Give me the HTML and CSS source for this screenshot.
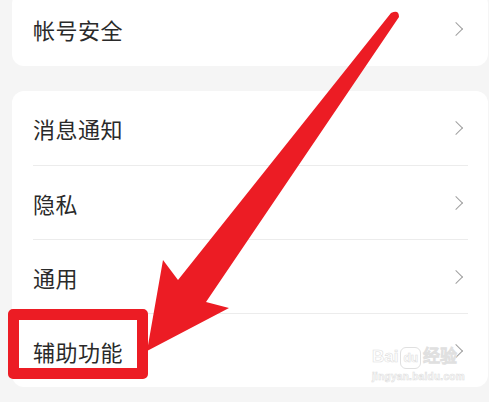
FILE: index.html
```html
<!DOCTYPE html>
<html lang="zh-CN">
<head>
    <meta charset="UTF-8">
    <meta name="viewport" content="width=device-width, initial-scale=1.0">
    <title>设置</title>
    <link rel="stylesheet" href="styles.css">
</head>
<body>
    <div class="page">
        <div class="card card-top">
            <div class="row"><span class="label">帐号安全</span><span class="chevron"></span></div>
        </div>

        <div class="card">
            <div class="row"><span class="label">消息通知</span><span class="chevron"></span></div>
            <div class="row"><span class="label">隐私</span><span class="chevron"></span></div>
            <div class="row"><span class="label">通用</span><span class="chevron"></span></div>
            <div class="row"><span class="label">辅助功能</span><span class="chevron"></span></div>
        </div>

        <!-- annotation layer -->
        <div class="highlight"></div>
        <svg class="arrow" width="489" height="402" viewBox="0 0 489 402">
            <path d="M391 21 L178 288 L163 268 L147 359 L229 316 L206 310 L399 25 Q399 17 391 21 Z" fill="#ec1c24"/>
        </svg>

        <div class="watermark">
            <div class="wm-logo">Bai<span class="wm-du">du</span>经验</div>
            <div class="wm-url">jingyan.baidu.com</div>
        </div>
    </div>
</body>
</html>
```

FILE: styles.css
```css
* {
    margin: 0;
    padding: 0;
    box-sizing: border-box;
}

body {
    background: #f5f5f5;
    font-family: "Noto Sans CJK SC", "Noto Sans", sans-serif;
    color: #2a2a2a;
    width: 489px;
    height: 402px;
    overflow: hidden;
}

.page {
    position: relative;
    height: 402px;
    padding: 0 1px 0 12px;
}

.card {
    background: #fff;
    border-radius: 12px;
    padding: 0 20px 0 21px;
    margin-top: 25px;
}

.card-top {
    margin-top: -8px;
}

.row {
    display: flex;
    align-items: center;
    justify-content: space-between;
    height: 74px;
    border-top: 1px solid #ececec;
}

.row:first-child {
    border-top: none;
}

.label {
    font-size: 22px;
    letter-spacing: 0.5px;
}

.chevron {
    width: 10px;
    height: 10px;
    margin-right: 7px;
    border-top: 1.8px solid #a0a0a0;
    border-right: 1.8px solid #a0a0a0;
    transform: rotate(45deg);
}

.highlight {
    position: absolute;
    left: 8px;
    top: 317px;
    width: 140px;
    height: 70px;
    border: 11px solid #ec1c24;
    border-radius: 5px;
}

.arrow {
    position: absolute;
    left: 0;
    top: 0;
}

.watermark {
    position: absolute;
    left: 372px;
    top: 355px;
    font-family: "Liberation Sans", sans-serif;
    font-weight: bold;
    color: #fff;
    -webkit-text-stroke: 0.6px #e0e0e0;
}

.wm-logo {
    font-size: 17px;
    line-height: 20px;
}

.wm-du {
    display: inline-block;
    border: 1px solid #e0e0e0;
    border-radius: 6px;
    font-size: 12px;
    padding: 0 2px;
    margin: 0 2px;
}

.wm-url {
    font-size: 10px;
    line-height: 16px;
    letter-spacing: 0.3px;
}
```
